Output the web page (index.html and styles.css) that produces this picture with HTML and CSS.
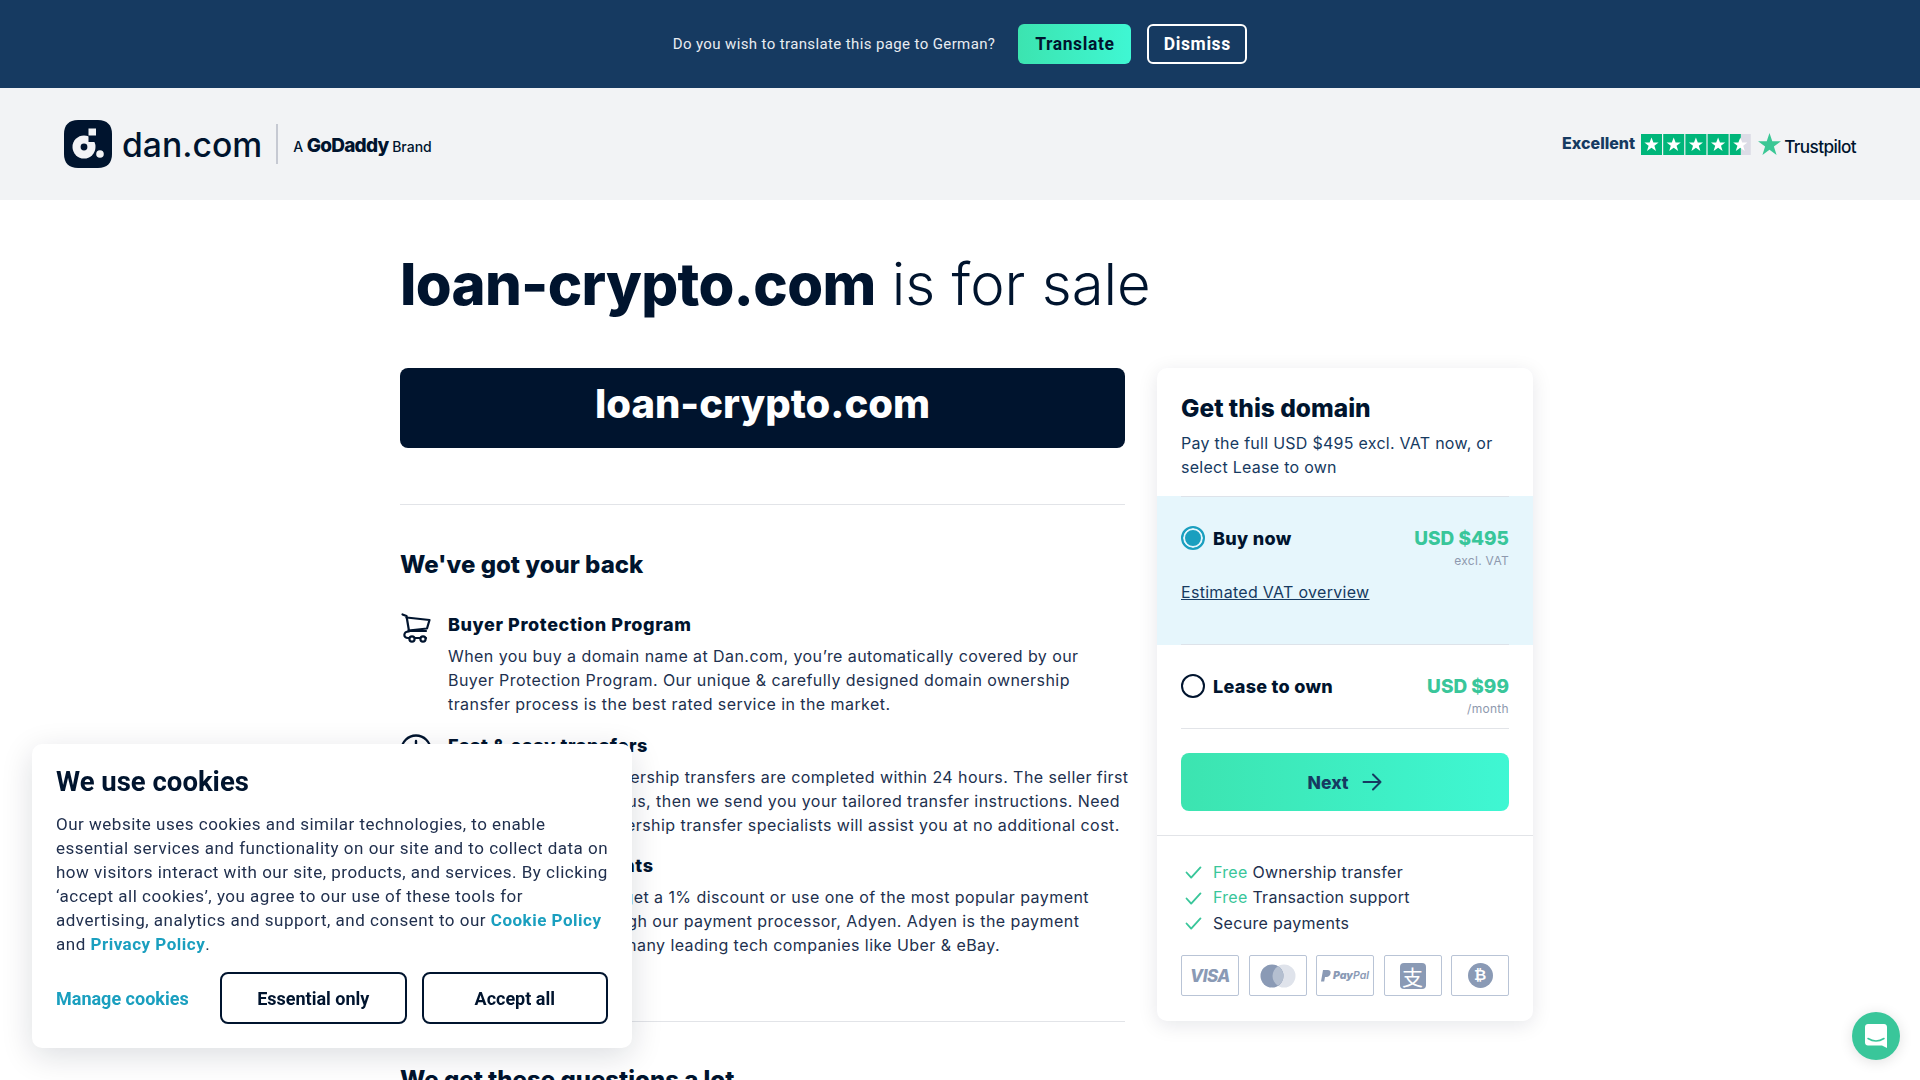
FILE: index.html
```html
<!DOCTYPE html>
<html lang="en">
<head>
    <meta charset="UTF-8">
    <meta name="viewport" content="width=device-width, initial-scale=1.0">
    <title>loan-crypto.com is for sale</title>
    <link rel="stylesheet" href="styles.css">
</head>
<body>

<!-- Translate bar -->
<div class="translate-bar">
    <span class="translate-text">Do you wish to translate this page to German?</span>
    <button class="btn-translate">Translate</button>
    <button class="btn-dismiss">Dismiss</button>
</div>

<!-- Header -->
<header class="site-header">
    <div class="brand">
        <svg class="brand-icon" viewBox="0 0 48 48" width="48" height="48">
            <path d="M14 0h20c9 0 14 5 14 14v20c0 9-5 14-14 14H14C5 48 0 43 0 34V14C0 5 5 0 14 0z" fill="#00142e"/>
            <circle cx="20" cy="27" r="11.5" fill="#f2f3f5"/>
            <circle cx="20" cy="27" r="3.4" fill="#00142e"/>
            <rect x="24.5" y="15" width="8" height="7" fill="#00142e"/>
            <rect x="24.5" y="8.500" width="7.500" height="7" fill="#f2f3f5"/>
            <circle cx="36" cy="34" r="3.8" fill="#f2f3f5"/>
        </svg>
        <span class="brand-name">dan.com</span>
        <span class="brand-divider"></span>
        <span class="brand-sub">A <b>GoDaddy</b> Brand</span>
    </div>
    <div class="trust">
        <span class="trust-label">Excellent</span>
        <svg class="trust-stars" viewBox="0 0 110 21" width="110" height="21">
            <rect x="0" width="21" height="21" fill="#00b67a"/>
            <rect x="22.2" width="21" height="21" fill="#00b67a"/>
            <rect x="44.4" width="21" height="21" fill="#00b67a"/>
            <rect x="66.6" width="21" height="21" fill="#00b67a"/>
            <rect x="88.8" width="21" height="21" fill="#dcdce6"/>
            <rect x="88.8" width="11" height="21" fill="#00b67a"/>
            <g fill="#fff">
                <path id="tp-star" d="M10.5 3.5l1.9 5h5.2l-4.2 3.2 1.6 5.3-4.5-3.2L6 17l1.6-5.3-4.2-3.2h5.2z"/>
                <use href="#tp-star" x="22.2"/>
                <use href="#tp-star" x="44.4"/>
                <use href="#tp-star" x="66.6"/>
                <use href="#tp-star" x="88.8"/>
            </g>
        </svg>
        <svg class="trust-star" viewBox="0 0 24 23" width="23" height="22">
            <path d="M12 0l2.9 8.7H24l-7.4 5.4 2.8 8.9L12 17.5 4.6 23l2.8-8.9L0 8.7h9.1z" fill="#3bc795"/>
        </svg>
        <span class="trust-name">Trustpilot</span>
    </div>
</header>

<main class="page">
    <h1 class="page-title"><b>loan-crypto.com</b> is for sale</h1>

    <div class="columns">
        <div class="left-col">
            <div class="domain-box">loan-crypto.com</div>
            <hr class="rule">

            <h2 class="section-title">We've got your back</h2>

            <div class="feature">
                <svg class="feature-icon" viewBox="0 0 30 30" width="30" height="30" fill="none" stroke="#00142e" stroke-width="2.2" stroke-linecap="round" stroke-linejoin="round">
                    <path d="M1.5 1.5l4 1.5 2.5 15h17"/>
                    <path d="M5.5 4.5L28.5 7 26 15.5 7.5 17.5"/>
                    <path d="M8 18.5c-6 0-6 6.5-1 6.5h18"/>
                    <circle cx="11" cy="26" r="2.6" fill="#fff"/>
                    <circle cx="22" cy="26" r="2.6" fill="#fff"/>
                </svg>
                <div>
                    <h3 class="feature-title">Buyer Protection Program</h3>
                    <p class="feature-text">When you buy a domain name at Dan.com, you’re automatically covered by our<br>Buyer Protection Program. Our unique &amp; carefully designed domain ownership<br>transfer process is the best rated service in the market.</p>
                </div>
            </div>

            <div class="feature">
                <svg class="feature-icon" viewBox="0 0 32 32" width="32" height="32" fill="none" stroke="#00142e" stroke-width="2.4" stroke-linecap="round">
                    <circle cx="16" cy="16" r="14.5"/>
                    <path d="M16 7v10"/>
                </svg>
                <div>
                    <h3 class="feature-title">Fast &amp; easy transfers</h3>
                    <p class="feature-text">95% of all domain ownership transfers are completed within 24 hours. The seller first<br>assigns the domain to us, then we send you your tailored transfer instructions. Need<br>help? Our domain ownership transfer specialists will assist you at no additional cost.</p>
                </div>
            </div>

            <div class="feature">
                <svg class="feature-icon" viewBox="0 0 32 32" width="32" height="32" fill="none" stroke="#00142e" stroke-width="2.4">
                    <rect x="2" y="6" width="28" height="20" rx="3"/>
                </svg>
                <div>
                    <h3 class="feature-title">Hassle free payments</h3>
                    <p class="feature-text">Pay with bank wire to get a 1% discount or use one of the most popular payment<br>options, handled through our payment processor, Adyen. Adyen is the payment<br>processor, trusted by many leading tech companies like Uber &amp; eBay.</p>
                </div>
            </div>

            <hr class="rule rule-second">
            <h2 class="section-title">We get these questions a lot</h2>
        </div>

        <aside class="buy-card">
            <div class="card-head">
                <h2 class="card-title">Get this domain</h2>
                <p class="card-intro">Pay the full USD $495 excl. VAT now, or select Lease to own</p>
            </div>

            <div class="option option-active">
                <div class="option-row">
                    <span class="radio radio-on"></span>
                    <span class="option-name">Buy now</span>
                    <span class="option-price">USD $495</span>
                </div>
                <div class="option-note">excl. VAT</div>
                <a class="vat-link" href="#">Estimated VAT overview</a>
            </div>

            <div class="option">
                <div class="option-row">
                    <span class="radio"></span>
                    <span class="option-name">Lease to own</span>
                    <span class="option-price">USD $99</span>
                </div>
                <div class="option-note">/month</div>
            </div>

            <div class="next-wrap">
                <button class="btn-next">Next
                    <svg viewBox="0 0 20 20" width="20" height="20" fill="none" stroke="#163a61" stroke-width="2" stroke-linecap="round" stroke-linejoin="round"><path d="M1.5 10h17M11 2.5l7.5 7.5-7.5 7.5"/></svg>
                </button>
            </div>

            <div class="perks">
                <ul class="perk-list">
                    <li><svg viewBox="0 0 18 14" width="17" height="13" fill="none" stroke="#39c69a" stroke-width="2" stroke-linecap="round" stroke-linejoin="round"><path d="M1.5 7l5 5.5L16.5 1.5"/></svg><span><em>Free</em> Ownership transfer</span></li>
                    <li><svg viewBox="0 0 18 14" width="17" height="13" fill="none" stroke="#39c69a" stroke-width="2" stroke-linecap="round" stroke-linejoin="round"><path d="M1.5 7l5 5.5L16.5 1.5"/></svg><span><em>Free</em> Transaction support</span></li>
                    <li><svg viewBox="0 0 18 14" width="17" height="13" fill="none" stroke="#39c69a" stroke-width="2" stroke-linecap="round" stroke-linejoin="round"><path d="M1.5 7l5 5.5L16.5 1.5"/></svg><span>Secure payments</span></li>
                </ul>
                <div class="pay-row">
                    <div class="pay-box"><span class="pay-visa">VISA</span></div>
                    <div class="pay-box">
                        <svg viewBox="0 0 36 24" width="36" height="24"><circle cx="24" cy="12" r="11.5" fill="#dfe3eb"/><circle cx="12" cy="12" r="11.5" fill="#8a9ab5"/><path d="M18 2.2a11.5 11.5 0 0 1 0 19.6a11.5 11.5 0 0 1 0-19.6z" fill="#b4bfd0"/></svg>
                    </div>
                    <div class="pay-box">
                        <svg viewBox="0 0 10 12" width="10" height="12"><path d="M2 0h4.5C9 0 10 1.5 9.5 3.5S7.5 7 5.5 7H4L3.2 11.5H0z" fill="#8a9ab5"/></svg>
                        <span class="pay-paypal"><b>Pay</b>Pal</span>
                    </div>
                    <div class="pay-box"><span class="pay-alipay">支</span></div>
                    <div class="pay-box"><span class="pay-btc">₿</span></div>
                </div>
            </div>
        </aside>
    </div>
</main>

<!-- Cookie popup -->
<div class="cookie">
    <h2 class="cookie-title">We use cookies</h2>
    <p class="cookie-text">Our website uses cookies and similar technologies, to enable<br>essential services and functionality on our site and to collect data on<br>how visitors interact with our site, products, and services. By clicking<br>‘accept all cookies’, you agree to our use of these tools for<br>advertising, analytics and support, and consent to our <a href="#">Cookie Policy</a><br>and <a href="#">Privacy Policy</a>.</p>
    <div class="cookie-actions">
        <a class="cookie-manage" href="#">Manage cookies</a>
        <button class="btn-cookie">Essential only</button>
        <button class="btn-cookie">Accept all</button>
    </div>
</div>

<!-- Chat launcher -->
<div class="chat">
    <svg viewBox="0 0 22 24" width="22" height="24">
        <path d="M3 0h16c1.7 0 3 1.3 3 3v21l-5-2.5H3c-1.7 0-3-1.3-3-3V3c0-1.7 1.3-3 3-3z" fill="#fff"/>
        <path d="M3 14.5c5 3 11 3 16 0" fill="none" stroke="#39c69a" stroke-width="1.5" stroke-linecap="round"/>
    </svg>
</div>

</body>
</html>
```

FILE: styles.css
```css
html, body {
    margin: 0;
    padding: 0;
    height: 1080px;
    overflow: hidden;
}
body {
    font-family: Inter, "Noto Sans", sans-serif;
    color: #00142e;
    background-color: #fff;
}
button {
    font-family: inherit;
    cursor: pointer;
}

/* translate bar */
.translate-bar {
    height: 88px;
    background-color: #163a61;
    display: flex;
    align-items: center;
    justify-content: center;
}
.translate-text {
    font-family: Roboto, sans-serif;
    font-size: 15px;
    letter-spacing: 0.38px;
    color: #e8ecf1;
    margin-right: 23px;
}
.btn-translate, .btn-dismiss {
    font-family: Roboto, sans-serif;
    font-size: 17.5px;
    font-weight: 700;
    letter-spacing: 0.6px;
    height: 40px;
    border-radius: 6px;
}
.btn-translate {
    width: 113px;
    border: none;
    color: #00142e;
    background: linear-gradient(90deg, #3ce4b0, #3ff7d3);
    margin-right: 16px;
}
.btn-dismiss {
    width: 100px;
    border: 2px solid #fff;
    color: #fff;
    background: transparent;
}

/* header */
.site-header {
    height: 112px;
    background-color: #f2f3f5;
    display: flex;
    align-items: center;
    justify-content: space-between;
    padding: 0 64px;
}
.brand {
    display: flex;
    align-items: center;
}
.brand-name {
    font-size: 33.7px;
    font-weight: 500;
    margin-left: 10px;
}
.brand-divider {
    width: 2px;
    height: 40px;
    background-color: #c6c9d2;
    margin: 0 15px 0 14px;
}
.brand-sub {
    font-size: 14px;
    font-weight: 500;
    padding-top: 3px;
}
.brand-sub b {
    font-size: 19px;
    font-weight: 800;
    letter-spacing: -0.8px;
}
.trust {
    display: flex;
    align-items: center;
}
.trust-label {
    font-size: 16px;
    font-weight: 800;
    color: #163a61;
    margin: -2px 6px 0 0;
}
.trust-star {
    margin-left: 7px;
}
.trust-name {
    font-size: 17.2px;
    font-weight: 500;
    letter-spacing: -0.6px;
    margin-left: 3px;
    padding-top: 4px;
}

/* main */
.page {
    margin-left: 400px;
    width: 1133px;
}
.page-title {
    margin: 0;
    padding-top: 47px;
    height: 121px;
    font-size: 58px;
    line-height: 75px;
    font-weight: 300;
}
.page-title b {
    font-weight: 800;
    letter-spacing: -0.7px;
}
.columns {
    display: grid;
    grid-template-columns: 725px 376px;
    column-gap: 32px;
    align-items: start;
}
.domain-box {
    height: 80px;
    border-radius: 8px;
    background-color: #00142e;
    color: #fff;
    font-size: 40px;
    font-weight: 800;
    text-align: center;
    line-height: 72px;
}
.rule {
    border: none;
    border-top: 1px solid #e2e4e8;
    margin: 56px 0 0;
}
.rule-second {
    margin-top: 64px;
}
.section-title {
    font-size: 24px;
    font-weight: 800;
    line-height: 32px;
    margin: 44px 0 32px;
}
.rule-second + .section-title {
    margin-top: 42px;
}
.feature {
    display: flex;
    margin-bottom: 17.5px;
}
.feature-icon {
    flex: none;
    width: 32px;
    margin: 0 16px 0 0;
}
.feature-title {
    font-size: 18px;
    font-weight: 800;
    letter-spacing: 0.6px;
    line-height: 24px;
    margin: 0 0 7px;
}
.feature-text {
    margin: 0;
    font-size: 16px;
    line-height: 24px;
    letter-spacing: 0.43px;
    color: #21304e;
    white-space: nowrap;
}

/* buy card */
.buy-card {
    height: 653px;
    border-radius: 10px;
    background-color: #fff;
    box-shadow: 0 4px 20px rgba(0, 20, 46, 0.1);
    overflow: hidden;
}
.card-head {
    padding: 24px 24px 0;
    height: 104px;
}
.card-title {
    font-size: 24.5px;
    font-weight: 800;
    line-height: 32px;
    margin: 0 0 7px;
}
.card-intro {
    margin: 0;
    font-size: 16px;
    line-height: 24px;
    letter-spacing: 0.27px;
    color: #163a61;
}
.option {
    padding: 29px 24px 0;
}
.option::after {
    content: "";
    display: block;
    border-bottom: 1px solid #e2e4e8;
    margin-top: 9px;
}
.option-active {
    position: relative;
    box-sizing: border-box;
    height: 149px;
    padding-top: 30px;
    background-color: #e6f6fc;
}
.option-active::before, .option-active::after {
    content: "";
    position: absolute;
    left: 24px;
    right: 24px;
    margin: 0;
    border-bottom: 1px solid #dde3ea;
}
.option-active::before {
    top: 0;
}
.option-active::after {
    bottom: 0;
}
.option-row {
    display: flex;
    align-items: center;
    height: 24px;
}
.radio {
    width: 24px;
    height: 24px;
    box-sizing: border-box;
    border-radius: 50%;
    border: 2px solid #00142e;
    margin-right: 8px;
    background-color: #fff;
}
.radio-on {
    border-color: #1a9fbf;
    background-color: #1a9fbf;
    box-shadow: inset 0 0 0 2px #e6f6fc;
}
.option-name {
    font-size: 18px;
    font-weight: 800;
    letter-spacing: 0.3px;
    flex: 1;
}
.option-price {
    font-size: 19px;
    font-weight: 800;
    color: #39c69a;
}
.option-note {
    text-align: right;
    font-size: 12px;
    line-height: 20px;
    letter-spacing: 0.3px;
    color: #8e99ae;
    margin-top: 1px;
}
.vat-link {
    display: block;
    margin-top: 9px;
    font-size: 16px;
    line-height: 24px;
    letter-spacing: 0.3px;
    color: #163a61;
}
.next-wrap {
    padding: 24px;
    border-bottom: 1px solid #e2e4e8;
}
.btn-next {
    width: 100%;
    height: 58px;
    border: none;
    border-radius: 8px;
    background: linear-gradient(90deg, #3ce4b0, #3ff7d3);
    color: #163a61;
    font-size: 17.5px;
    font-weight: 800;
    display: flex;
    align-items: center;
    justify-content: center;
    gap: 14px;
}
.perks {
    padding: 23px 24px 0;
}
.perk-list {
    list-style: none;
    margin: 0 0 19.5px;
    padding: 0;
}
.perk-list li {
    display: flex;
    align-items: center;
    height: 25.5px;
    font-size: 16px;
    letter-spacing: 0.3px;
    color: #21304e;
}
.perk-list svg {
    margin: 2px 11px 0 4px;
}
.perk-list em {
    font-style: normal;
    color: #39c69a;
}
.pay-row {
    display: flex;
    justify-content: space-between;
}
.pay-box {
    width: 58px;
    height: 41px;
    box-sizing: border-box;
    border: 1px solid #b9c4d6;
    border-radius: 2px;
    display: flex;
    align-items: center;
    justify-content: center;
    gap: 2px;
    color: #8a9ab5;
}
.pay-visa {
    font-size: 17px;
    font-weight: 800;
    font-style: italic;
    letter-spacing: -0.5px;
}
.pay-paypal {
    font-size: 10.5px;
    font-style: italic;
    font-weight: 600;
}
.pay-alipay {
    width: 26px;
    height: 26px;
    border-radius: 4px;
    background-color: #8a9ab5;
    color: #fff;
    font-family: "Noto Sans CJK SC", sans-serif;
    font-size: 21px;
    line-height: 26px;
    text-align: center;
}
.pay-btc {
    width: 25px;
    height: 25px;
    border-radius: 50%;
    background-color: #8a9ab5;
    color: #fff;
    font-family: "DejaVu Sans", sans-serif;
    font-size: 15px;
    font-weight: 700;
    line-height: 25px;
    text-align: center;
}

/* cookie popup */
.cookie {
    position: fixed;
    left: 32px;
    top: 744px;
    width: 600px;
    height: 304px;
    box-sizing: border-box;
    padding: 24px;
    border-radius: 10px;
    background-color: #fff;
    box-shadow: 0 8px 32px rgba(0, 20, 46, 0.14);
    font-family: Roboto, sans-serif;
}
.cookie-title {
    font-family: Roboto, sans-serif;
    font-size: 27.5px;
    font-weight: 700;
    line-height: 28px;
    margin: 0 0 16px;
}
.cookie-text {
    margin: 0;
    font-size: 17px;
    line-height: 24px;
    letter-spacing: 0.5px;
    color: #21304e;
    white-space: nowrap;
}
.cookie-text a, .cookie-manage {
    color: #1a9fbf;
    font-weight: 700;
    text-decoration: none;
}
.cookie-actions {
    display: flex;
    align-items: center;
    margin-top: 16px;
}
.cookie-manage {
    font-size: 18px;
    width: 164px;
}
.btn-cookie {
    width: 186.5px;
    height: 52px;
    border: 2px solid #00142e;
    border-radius: 8px;
    background-color: #fff;
    color: #00142e;
    font-family: Roboto, sans-serif;
    font-size: 18px;
    font-weight: 700;
    margin-right: 15px;
}
.btn-cookie:last-child {
    margin-right: 0;
}

/* chat launcher */
.chat {
    position: fixed;
    left: 1852px;
    top: 1012px;
    width: 48px;
    height: 48px;
    border-radius: 50%;
    background-color: #39c69a;
    box-shadow: 0 2px 14px rgba(0, 0, 0, 0.12);
    display: flex;
    align-items: center;
    justify-content: center;
}
```
